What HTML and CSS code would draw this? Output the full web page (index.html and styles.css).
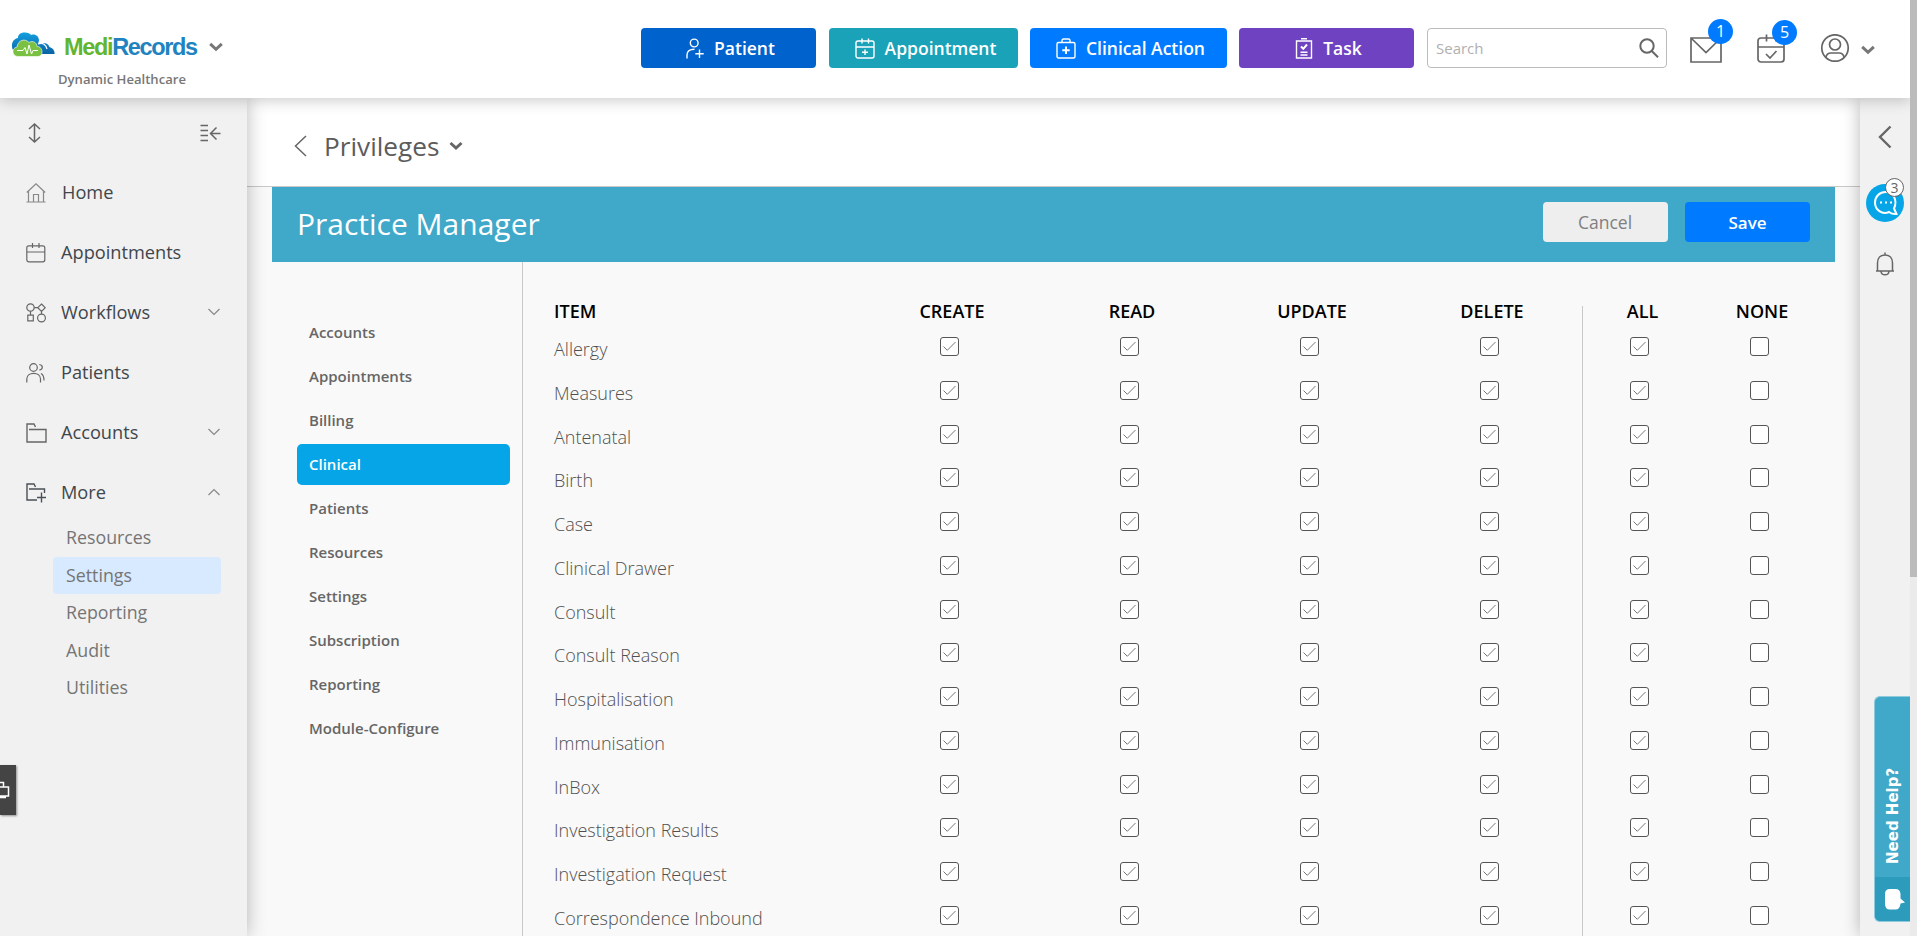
FILE: index.html
```html
<!DOCTYPE html>
<html lang="en">
<head>
    <meta charset="UTF-8">
    <meta name="viewport" content="width=device-width, initial-scale=1.0">
    <title>MediRecords - Privileges</title>
    <link rel="stylesheet" href="styles.css">
</head>
<body>
    <div class="app">
        <header class="topbar">
            <div class="brand">
                <div class="brand-row">
                    <svg class="logo" width="44" height="26" viewBox="0 0 44 26">
                        <defs>
                            <linearGradient id="cloud" x1="0" y1="0" x2="0" y2="1">
                                <stop offset="0" stop-color="#12a0e0"/>
                                <stop offset="1" stop-color="#0b62a4"/>
                            </linearGradient>
                        </defs>
                        <path fill="url(#cloud)" d="M3 20C-1 14 1 7 7 6C7 2 10 0.500 14 0.500C17 0.500 19 1.500 20 3C24 1.500 28 4 28 8.500L27 12C33 10 37 11 38.500 15C42 16 44 19 43.500 22H12Z"/>
                        <path fill="none" stroke="#fff" stroke-width="1.200" d="M27 12C32 10 35 13 36 17"/>
                        <path fill="#7ac143" stroke="#fff" stroke-width="0.600" d="M7 24.500C1 24.500 0 16 6 15C7 8 14 6 18 10.500C22 8 26 11 26 14.500C32 14 33 24.500 27 24.500Z"/>
                        <path fill="none" stroke="#fff" stroke-width="1" d="M6 18.500H12L14 15.500L16 22L18 13L20.500 22L22 18.500H27"/>
                    </svg>
                    <span class="brand-name"><span class="medi">Medi</span><span class="records">Records</span></span>
                    <svg class="chev" width="14" height="10" viewBox="0 0 14 10"><path d="M1.200 1.800L7 7.300L12.800 1.800"/></svg>
                </div>
                <div class="practice">Dynamic Healthcare</div>
            </div>
            <div class="actions">
                <button class="btn patient">
                    <svg class="ico" width="18" height="21" viewBox="0 0 18 21"><circle cx="8.200" cy="5" r="3.900"/><path d="M1 20.500V17C1 13 3.500 11.200 8.500 11.200M13.500 11.500V20M9.300 15.800H17.700"/></svg>
                    Patient
                </button>
                <button class="btn appointment">
                    <svg class="ico" width="20" height="21" viewBox="0 0 20 21"><rect x="1" y="3" width="18" height="17" rx="2"/><path d="M1 9H19M7 0.500V5.500M13.500 0.500V5.500M10 11.500V17M7 14.200H13"/></svg>
                    Appointment
                </button>
                <button class="btn clinical">
                    <svg class="ico" width="20" height="21" viewBox="0 0 20 21"><rect x="1" y="4.500" width="18" height="15.500" rx="1.500"/><path d="M6 4.500V2.500Q6 1 7.500 1H12.500Q14 1 14 2.500V4.500"/><path class="bold" d="M10 8.500V16M6.300 12.200H13.700"/></svg>
                    Clinical Action
                </button>
                <button class="btn task">
                    <svg class="ico" width="18" height="21" viewBox="0 0 18 21"><path d="M1.500 3H16.500V20H1.500ZM6 0.800H12M5.500 14.300H12.500M5.500 17H12.500"/><path class="bold" d="M6 8.500L8.300 10.800L12 6.500"/></svg>
                    Task
                </button>
            </div>
            <div class="search">
                <span>Search</span>
                <svg width="20" height="20" viewBox="0 0 20 20"><circle cx="8" cy="8" r="6.700"/><path d="M12.500 12.700L19 19.300"/></svg>
            </div>
            <div class="tools">
                <div class="tool mail">
                    <svg width="32" height="26" viewBox="0 0 32 26"><path d="M1 1H31V25H1ZM1 1L16 15.500L31 1"/></svg>
                    <span class="badge">1</span>
                </div>
                <div class="tool calendar">
                    <svg width="28" height="29" viewBox="0 0 28 29"><rect x="1" y="4" width="26" height="24" rx="3"/><path d="M1 13H27M9.500 0.500V7.500M19 0.500V7.500M9 20L13 24L19.500 17"/></svg>
                    <span class="badge">5</span>
                </div>
                <div class="tool user">
                    <svg width="28" height="28" viewBox="0 0 28 28"><circle cx="14" cy="14" r="13.200"/><circle cx="14" cy="10.500" r="5.500"/><path d="M4.800 23.500C5.500 20 7 19 10 19H18C21 19 22.500 20 23.200 23.500"/></svg>
                    <svg class="chev" width="14" height="10" viewBox="0 0 14 10"><path d="M1.200 1.800L7 7.300L12.800 1.800"/></svg>
                </div>
            </div>
        </header>

        <div class="layout">
            <nav class="sidebar">
                <div class="sidebar-tools">
                    <svg width="13" height="20" viewBox="0 0 13 20"><path d="M6.500 1V19M1 6L6.500 1L12 6M1 14L6.500 19L12 14"/></svg>
                    <svg width="21" height="18" viewBox="0 0 21 18"><path d="M0.500 1.500H8M0.500 6.500H8M0.500 11.500H8M0.500 16.500H8M20.500 9.500H10.500M16.500 3.500L10.500 9.500L16.500 15.500"/></svg>
                </div>
                <ul class="menu">
                    <li class="home">
                        <svg class="ico" width="20" height="20" viewBox="0 0 20 20"><path d="M0.800 9.500L10 0.800L19.200 9.500M2.500 8V19M17.500 8V19M0.500 19H19.500M7.500 19V11.500H12.500V19"/></svg>
                        <span>Home</span>
                    </li>
                    <li>
                        <svg class="ico" width="20" height="20" viewBox="0 0 20 20"><rect x="0.800" y="2.800" width="18" height="16" rx="2"/><path d="M1 9H19M6.500 0V5M13 0V5"/></svg>
                        <span>Appointments</span>
                    </li>
                    <li>
                        <svg class="ico" width="20" height="20" viewBox="0 0 20 20"><circle cx="4.500" cy="4.500" r="3.700"/><path d="M8.200 4.700H12M15.500 1L19.200 4.700L15.500 8.400L11.800 4.700ZM4.500 8.200V12M1.800 12.200H7.300V17.800H1.800ZM15.500 8.400V11"/><circle cx="15.500" cy="15" r="3.900"/></svg>
                        <span>Workflows</span>
                        <svg class="arrow" width="12" height="8" viewBox="0 0 12 8"><path d="M0.500 1L6 6.500L11.500 1"/></svg>
                    </li>
                    <li>
                        <svg class="ico" width="20" height="20" viewBox="0 0 20 20"><circle cx="7.500" cy="4.500" r="3.800"/><path d="M0.800 19.500V16C0.800 8.500 14.500 8.500 14.500 16V19.500M13.300 1.500C17.300 2 17.300 6.800 13.300 7M15 10.500C17 11.500 18 13.500 18 17.500"/></svg>
                        <span>Patients</span>
                    </li>
                    <li>
                        <svg class="ico thick" width="21" height="20" viewBox="0 0 21 20"><path d="M9.500 4L8 1H1V19H20V6.500H3"/></svg>
                        <span>Accounts</span>
                        <svg class="arrow" width="12" height="8" viewBox="0 0 12 8"><path d="M0.500 1L6 6.500L11.500 1"/></svg>
                    </li>
                    <li class="open">
                        <svg class="ico thick" width="21" height="20" viewBox="0 0 21 20"><path d="M9.500 4L8 1H1V17H11M3 6H18.500V10M15.500 9.500V19.500M11 14.500H20"/></svg>
                        <span>More</span>
                        <svg class="arrow" width="12" height="8" viewBox="0 0 12 8"><path d="M0.500 7L6 1.500L11.500 7"/></svg>
                    </li>
                </ul>
                <ul class="submenu">
                    <li>Resources</li>
                    <li class="active">Settings</li>
                    <li>Reporting</li>
                    <li>Audit</li>
                    <li>Utilities</li>
                </ul>
            </nav>

            <main class="content">
                <div class="page-head">
                    <svg class="back" width="13" height="22" viewBox="0 0 13 22"><path d="M12 1L1.500 11L12 21"/></svg>
                    <h1>Privileges</h1>
                    <svg class="chev" width="14" height="10" viewBox="0 0 14 10"><path d="M1.500 2L7 7L12.500 2"/></svg>
                </div>
                <section class="panel">
                    <div class="banner">
                        <h2>Practice Manager</h2>
                        <button class="btn cancel">Cancel</button>
                        <button class="btn save">Save</button>
                    </div>
                    <div class="panel-body">
                        <ul class="groups">
                            <li>Accounts</li>
                            <li>Appointments</li>
                            <li>Billing</li>
                            <li class="active">Clinical</li>
                            <li>Patients</li>
                            <li>Resources</li>
                            <li>Settings</li>
                            <li>Subscription</li>
                            <li>Reporting</li>
                            <li>Module-Configure</li>
                        </ul>
                        <div class="matrix">
                            <div class="perms">
                                <div class="row head">
                                    <span>ITEM</span><span>CREATE</span><span>READ</span><span>UPDATE</span><span>DELETE</span>
                                </div>
                            </div>
                            <div class="totals">
                                <div class="row head">
                                    <span>ALL</span><span>NONE</span>
                                </div>
                            </div>
                        </div>
                    </div>
                </section>
            </main>

            <aside class="rail">
                <svg class="collapse" width="14" height="24" viewBox="0 0 14 24"><path d="M12.500 1.500L2 12L12.500 22.500"/></svg>
                <div class="chat">
                    <svg width="26" height="26" viewBox="0 0 26 26"><path d="M21 18.500L23.500 24C20.500 24.300 18 23.500 16 22C9 25 2 20 2 12.500C2 6.500 6.800 2 12.500 2C20 2 25 10 21 18.500Z"/><path class="dots" d="M7 12.500H9M12 12.500H14M17 12.500H19"/></svg>
                    <span class="count">3</span>
                </div>
                <svg class="bell" width="20" height="24" viewBox="0 0 20 24"><path d="M1 19H19M2.500 19V11C2.500 6 5.500 3 10 3C14.500 3 17.500 6 17.500 11V19M10 3V0.500M6 19.500C6.500 23.800 13.500 23.800 14 19.500"/></svg>
            </aside>
        </div>

        <div class="help">
            <div class="help-text">Need Help?</div>
            <div class="help-icon">
                <svg width="20" height="21" viewBox="0 0 20 21"><path d="M5 0H10.500Q15 0 15.500 5V9.500L20 13.500L15.500 14.500Q15 20.500 10.500 20.500H5Q0 20.500 0 15V5Q0 0 5 0Z"/></svg>
            </div>
        </div>
        <div class="remote">
            <svg width="10" height="20" viewBox="0 0 10 20"><path d="M0 1.500H3.500V5.500M0 6H8.500V15H0M0 16.500H6"/></svg>
        </div>
        <div class="scrollbar"><div class="thumb"></div></div>
    </div>
    <script>
        const items = [
            'Allergy', 'Measures', 'Antenatal', 'Birth', 'Case', 'Clinical Drawer', 'Consult',
            'Consult Reason', 'Hospitalisation', 'Immunisation', 'InBox', 'Investigation Results',
            'Investigation Request', 'Correspondence Inbound'
        ];
        const perms = document.querySelector('.perms');
        const totals = document.querySelector('.totals');
        const tick = '<svg width="13" height="11" viewBox="0 0 13 11"><path d="M0.500 5.500L4.300 9.300L12.500 1"/></svg>';
        const checked = `<span class="cell"><i class="box">${tick}</i></span>`;
        const empty = '<span class="cell"><i class="box"></i></span>';

        items.forEach(item => {
            perms.insertAdjacentHTML('beforeend', `<div class="row"><span class="name">${item}</span>${checked.repeat(4)}</div>`);
            totals.insertAdjacentHTML('beforeend', `<div class="row">${checked}${empty}</div>`);
        });
    </script>
</body>
</html>
```
FILE: styles.css
```css
* {
    box-sizing: border-box;
}
body {
    margin: 0;
    font-family: "Open Sans", "Noto Sans", sans-serif;
    color: #666;
    background-color: #f9f9f9;
}
ul {
    list-style: none;
    margin: 0;
    padding: 0;
}
svg {
    display: block;
    flex: none;
    fill: none;
    stroke: #666;
    stroke-width: 1.5;
}
.app {
    position: relative;
    width: 100%;
    height: 936px;
    padding-right: 7px;
    overflow: hidden;
}

/* top bar */
.topbar {
    position: relative;
    z-index: 3;
    display: flex;
    height: 98px;
    padding-top: 28px;
    background-color: #fff;
    box-shadow: 0 2px 14px rgba(0, 0, 0, 0.22);
}
.brand {
    width: 641px;
    padding: 3px 0 0 11px;
}
.brand-row {
    display: flex;
    align-items: center;
    height: 28px;
}
.logo {
    stroke: none;
}
.brand-name {
    width: 133px;
    margin: 4px 12px 0 9px;
    font-family: "Liberation Sans", Arial, sans-serif;
    font-size: 23.5px;
    font-weight: bold;
    line-height: 28px;
    letter-spacing: -1.35px;
    white-space: nowrap;
}
.medi {
    color: #62b62f;
}
.records {
    color: #2083bf;
}
.chev {
    stroke: #777;
    stroke-width: 3;
}
.brand .chev {
    margin-top: 4px;
}
.practice {
    margin: 11px 0 0 47px;
    font-size: 13.1px;
    font-weight: 600;
    line-height: 18px;
    color: #777;
}
.actions {
    display: flex;
    height: 40px;
}
.btn {
    display: flex;
    align-items: center;
    justify-content: center;
    height: 40px;
    padding: 0;
    border: none;
    border-radius: 4px;
    font-family: inherit;
    font-size: 17.5px;
    font-weight: 600;
    color: #fff;
}
.btn .ico {
    margin-right: 10px;
    margin-left: 4px;
    stroke: #fff;
    stroke-width: 1.4;
}
.btn .bold {
    stroke-width: 2;
}
.patient {
    width: 175px;
    margin-right: 13px;
    background-color: #0062cc;
}
.appointment {
    width: 189px;
    margin-right: 12px;
    background-color: #1aa2b8;
}
.clinical {
    width: 197px;
    margin-right: 12px;
    background-color: #007bff;
}
.task {
    width: 175px;
    margin-right: 13px;
    background-color: #6f42c1;
}
.search {
    display: flex;
    align-items: center;
    justify-content: space-between;
    width: 240px;
    height: 40px;
    padding: 0 7px 0 8px;
    border: 1px solid #bbb;
    border-radius: 4px;
    font-size: 15px;
    color: #b0b0b0;
}
.search svg {
    stroke-width: 2;
}
.tools {
    display: flex;
    margin-left: 23px;
}
.tools svg {
    stroke-width: 1.7;
}
.tools .chev {
    margin-top: 3px;
    stroke-width: 3;
}
.tool {
    position: relative;
}
.mail {
    width: 67px;
    padding-top: 9px;
}
.calendar {
    width: 64px;
    padding-top: 6px;
}
.user {
    display: flex;
    align-items: center;
    gap: 12px;
    height: 40px;
}
.badge {
    position: absolute;
    top: -9px;
    left: 18px;
    width: 25px;
    height: 25px;
    border-radius: 50%;
    background-color: #007bff;
    color: #fff;
    font-size: 16px;
    line-height: 25px;
    text-align: center;
}
.calendar .badge {
    top: -8px;
    left: 15px;
}

/* sidebar */
.layout {
    display: flex;
    height: 838px;
}
.sidebar {
    position: relative;
    z-index: 2;
    flex: none;
    width: 247px;
    background-color: #f1f1f1;
    box-shadow: 0 0 18px rgba(0, 0, 0, 0.28);
}
.sidebar-tools {
    display: flex;
    justify-content: space-between;
    align-items: center;
    height: 64px;
    padding: 6px 26px 0 28px;
}
.menu li {
    display: flex;
    align-items: center;
    height: 60px;
    padding: 0 27px 0 26px;
    font-size: 18.2px;
    font-weight: 500;
    color: #40464b;
}
.menu .ico {
    margin-top: 1px;
    stroke-width: 1.2;
}
.menu .thick {
    stroke-width: 1.4;
}
.menu .home .ico {
    stroke: #888;
}
.menu .open .ico {
    stroke: #495057;
}
.menu span {
    flex: 1;
    padding-left: 15px;
}
.menu .thick + span {
    padding-left: 14px;
}
.menu .home span {
    padding-left: 16px;
}
.menu .arrow {
    stroke: #888;
    stroke-width: 1.2;
}
.submenu {
    padding: 0 26px 0 53px;
    margin-top: -3px;
}
.submenu li {
    height: 37.5px;
    padding-left: 13px;
    border-radius: 4px;
    font-size: 17.8px;
    font-weight: 500;
    line-height: 37px;
    color: #757575;
}
.submenu .active {
    background-color: #d8eaff;
}

/* page */
.content {
    flex: 1;
    overflow: hidden;
}
.page-head {
    display: flex;
    align-items: center;
    height: 89px;
    padding: 7px 0 0 47px;
    border-bottom: 1px solid #c8c8c8;
    background-color: #fff;
}
.page-head h1 {
    margin: 0 10px 0 17px;
    font-size: 26.2px;
    font-weight: 500;
    color: #5c5c5c;
}
.page-head .chev {
    stroke: #666;
}
.panel {
    margin: 0 25px;
}
.banner {
    display: flex;
    align-items: center;
    height: 75px;
    padding: 0 25px 5px;
    background-color: #40a8c8;
}
.banner h2 {
    flex: 1;
    margin: 3px 0 0;
    font-size: 30px;
    font-weight: 400;
    color: #fff;
}
.banner .btn {
    width: 125px;
    font-size: 17px;
}
.banner .cancel {
    margin-right: 17px;
    padding-right: 1px;
    background-color: #eee;
    color: #808080;
    font-size: 17.5px;
    font-weight: 500;
}
.banner .save {
    background-color: #007bff;
}
.panel-body {
    display: flex;
    height: 674px;
}
.groups {
    width: 251px;
    padding: 50px 12px 0 25px;
    border-right: 1px solid #c8c8c8;
}
.groups li {
    height: 41px;
    margin-bottom: 3px;
    padding-left: 12px;
    border-radius: 5px;
    font-size: 15px;
    font-weight: 600;
    line-height: 41px;
}
.groups .active {
    background-color: #05a5e8;
    color: #fff;
}

/* permission matrix */
.matrix {
    display: flex;
    padding: 34px 0 0 31px;
}
.row {
    display: grid;
    grid-template-columns: 308px repeat(4, 180px);
    height: 43.75px;
}
.row.head {
    height: 32px;
    font-size: 18px;
    font-weight: 600;
    line-height: 31px;
    text-align: center;
    color: #000;
}
.perms .head span:first-child {
    text-align: left;
}
.totals {
    margin-top: 10px;
    border-left: 1px solid #c8c8c8;
}
.totals .row {
    grid-template-columns: 119px 120px;
}
.totals .head {
    height: 22px;
    line-height: 11px;
}
.name {
    font-size: 18px;
    font-weight: 300;
    line-height: 43px;
    color: #505050;
}
.cell {
    display: flex;
    justify-content: center;
    padding: 9px 6px 0 0;
}
.box {
    display: flex;
    align-items: center;
    justify-content: center;
    width: 19px;
    height: 19px;
    border: 1px solid #555;
    border-radius: 3px;
    background-color: #fff;
}
.box svg {
    stroke: #777;
    stroke-width: 1;
}

/* right rail */
.rail {
    position: relative;
    z-index: 2;
    display: flex;
    flex-direction: column;
    align-items: center;
    flex: none;
    width: 50px;
    padding-top: 27px;
    background-color: #f1f1f1;
    box-shadow: 0 0 18px rgba(0, 0, 0, 0.28);
}
.collapse {
    stroke-width: 2.4;
}
.chat {
    position: relative;
    display: flex;
    align-items: center;
    justify-content: center;
    width: 38px;
    height: 38px;
    margin: 35px 0 30px;
    padding-left: 1px;
    border-radius: 50%;
    background-color: #05a5e8;
}
.chat svg {
    stroke: #fff;
    stroke-width: 2;
}
.count {
    position: absolute;
    top: -6px;
    right: 0;
    width: 19px;
    height: 19px;
    border: 1px solid #666;
    border-radius: 50%;
    background-color: #fff;
    font-size: 14px;
    line-height: 17px;
    text-align: center;
}

/* floating widgets */
.help {
    position: absolute;
    z-index: 4;
    top: 696px;
    right: 7px;
    width: 36px;
    height: 226px;
    border: 1px solid #8fcbdd;
    border-right: none;
    border-radius: 6px 0 0 6px;
    background-color: #40a8c8;
    overflow: hidden;
}
.help-text {
    width: 37px;
    height: 180px;
    padding-top: 13px;
    font-family: "DejaVu Sans", Verdana, sans-serif;
    font-size: 15px;
    font-weight: bold;
    line-height: 37px;
    color: #fff;
    writing-mode: vertical-rl;
    transform: rotate(180deg);
}
.help-icon {
    height: 46px;
    padding: 12px 0 0 10px;
    background-color: #2d9cbc;
}
.help-icon svg {
    fill: #fff;
    stroke: none;
}
.remote {
    position: absolute;
    z-index: 4;
    top: 765px;
    left: 0;
    width: 16px;
    height: 50px;
    padding-top: 16px;
    background-color: #444;
    box-shadow: 1px 1px 2px rgba(0, 0, 0, 0.4);
}
.remote svg {
    stroke: #fff;
}
.scrollbar {
    position: absolute;
    z-index: 5;
    top: 0;
    right: 0;
    width: 7px;
    height: 936px;
    background-color: #ebebeb;
}
.thumb {
    height: 577px;
    background-color: #bbb;
}
```
